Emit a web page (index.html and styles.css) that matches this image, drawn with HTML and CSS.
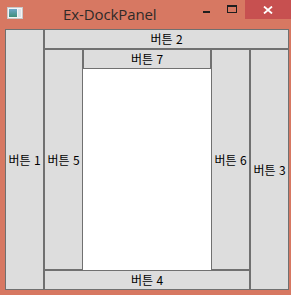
FILE: index.html
```html
<!DOCTYPE html>
<html lang="ko">
<head>
<meta charset="utf-8">
<link rel="stylesheet" href="styles.css">
</head>
<body>
<div class="window">
  <div class="titlebar">
    <svg class="app-icon" width="16" height="12" viewBox="0 0 16 12">
      <rect x="0.5" y="0.5" width="15" height="11" fill="#f4f4f4" stroke="#c9c9c9"/>
      <defs>
        <linearGradient id="g" x1="0" y1="0" x2="0" y2="1">
          <stop offset="0" stop-color="#6fa7c9"/>
          <stop offset="1" stop-color="#3f8f7a"/>
        </linearGradient>
      </defs>
      <rect x="2" y="2" width="8" height="8" fill="url(#g)"/>
      <rect x="11" y="2" width="3" height="8" fill="#d9e4ea"/>
    </svg>
    <div class="title">Ex-DockPanel</div>
    <div class="controls">
      <div class="ctl min"><span class="min-bar"></span></div>
      <div class="ctl max"><span class="max-box"></span></div>
      <div class="ctl close">
        <svg width="10" height="8" viewBox="0 0 10 8"><path d="M1 0.5 L9 7.5 M9 0.5 L1 7.5" stroke="#fff" stroke-width="1.8"/></svg>
      </div>
    </div>
  </div>
  <div class="client">
    <div class="btn side tall">버튼 1</div>
    <div class="col grow">
      <div class="btn bar">버튼 2</div>
      <div class="row grow">
        <div class="col grow">
          <div class="row grow">
            <div class="btn side">버튼 5</div>
            <div class="col grow">
              <div class="btn bar">버튼 7</div>
              <div class="fill"></div>
            </div>
            <div class="btn side">버튼 6</div>
          </div>
          <div class="btn bar">버튼 4</div>
        </div>
        <div class="btn side">버튼 3</div>
      </div>
    </div>
  </div>
</div>
</body>
</html>
```
FILE: styles.css
```css
html, body {
  margin: 0;
  padding: 0;
}
body {
  width: 291px;
  height: 295px;
  background: #d77862;
  overflow: hidden;
}
.window {
  display: flex;
  flex-direction: column;
  width: 291px;
  height: 295px;
}
.titlebar {
  height: 29px;
  display: flex;
  align-items: flex-start;
  position: relative;
}
.app-icon {
  margin: 7px 0 0 7px;
  flex: none;
}
.title {
  margin: 4px 0 0 40px;
  font-family: "Open Sans", "Noto Sans", sans-serif;
  font-size: 15px;
  line-height: 20px;
  color: #2f2a28;
  letter-spacing: -0.1px;
}
.controls {
  margin-left: auto;
  display: flex;
  height: 19px;
}
.ctl {
  display: flex;
  justify-content: center;
}
.min {
  width: 26px;
}
.min-bar {
  display: block;
  width: 7px;
  height: 2px;
  margin-top: 11px;
  background: #1e1e1e;
}
.max {
  width: 26px;
}
.max-box {
  display: block;
  box-sizing: border-box;
  width: 10px;
  height: 8px;
  margin-top: 5px;
  border: 1px solid #1e1e1e;
  border-top-width: 2px;
}
.close {
  width: 46px;
  height: 19px;
  background: #c75050;
  align-items: center;
}
.client {
  margin-left: 5px;
  width: 284px;
  height: 261px;
  display: flex;
  background: #ffffff;
}
.row {
  display: flex;
  min-height: 0;
  min-width: 0;
}
.col {
  display: flex;
  flex-direction: column;
  min-height: 0;
  min-width: 0;
}
.grow {
  flex: 1;
}
.btn {
  box-sizing: border-box;
  border: 1px solid #707070;
  background: #dddddd;
  font-family: "Noto Sans CJK KR", "Noto Sans", sans-serif;
  font-size: 12px;
  color: #000;
  display: flex;
  align-items: center;
  justify-content: center;
  white-space: nowrap;
  flex: none;
}
.side {
  width: 39px;
}
.bar {
  height: 20px;
  line-height: 18px;
}
.fill {
  flex: 1;
  background: #ffffff;
}
```
